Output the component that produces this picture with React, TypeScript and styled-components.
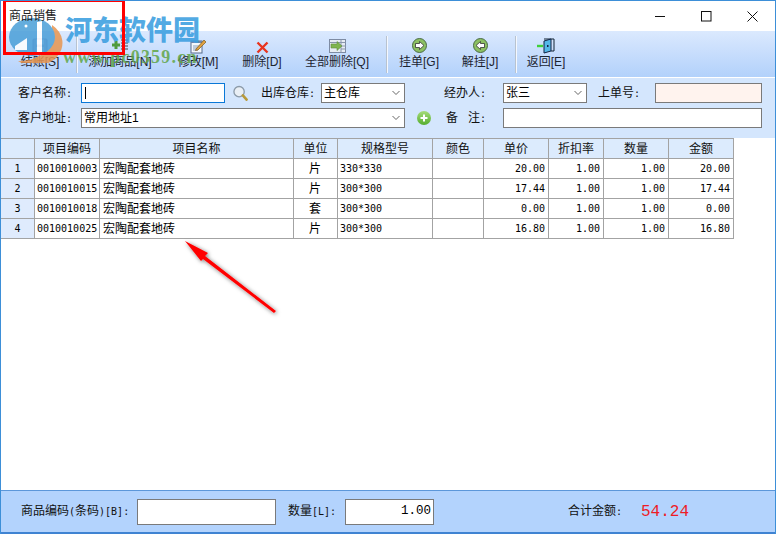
import React from "react";
import styled, { createGlobalStyle } from "styled-components";

const Global = createGlobalStyle`
  html, body { margin: 0; padding: 0; background: #fff; }
  * { box-sizing: border-box; }
`;
const CJK = `"Liberation Sans", "Noto Sans CJK SC", sans-serif`;
const MONO = `"DejaVu Sans Mono", "Noto Sans CJK SC", monospace`;
const SLAB = `"Liberation Mono", monospace`;

const Win = styled.div`
  position: relative; width: 776px; height: 534px; overflow: hidden;
  display: flex; flex-direction: column; background: #fff;
  border: 1px solid #3d8fd8; border-bottom: 0;
  font: 12px/14px ${CJK}; color: #000;
`;
const TitleBar = styled.div`
  height: 30px; flex: none; display: flex; align-items: center; padding: 0 0 0 8px; background: #fff; color: #222;
`;
const Title = styled.div`flex: 1; margin-top: -1px; position: relative; z-index: 2;`;
const WinBtn = styled.div<{ $w: number }>`
  width: ${(p) => p.$w}px; height: 30px; display: flex; align-items: center; justify-content: center;
`;
const Toolbar = styled.div`
  height: 46px; flex: none; display: flex; padding-left: 3px;
  background: linear-gradient(#dbe9fe, #b2d1fb); color: #1c2430;
`;
const ToolBtn = styled.div<{ $w: number }>`
  width: ${(p) => p.$w}px; display: flex; flex-direction: column; align-items: center; padding-top: 7px;
`;
const IconSlot = styled.div`height: 17px; display: flex; align-items: flex-start; justify-content: center;`;
const ToolLabel = styled.div`line-height: 15px; white-space: nowrap;`;
const Sep = styled.div<{ $ml: number }>`
  width: 2px; height: 37px; margin: 5px 0 0 ${(p) => p.$ml}px;
  background: linear-gradient(90deg, #b9c3cf 50%, #f4f8ff 50%);
`;
const FormPanel = styled.div`
  height: 60px; flex: none; margin-top: 1px; padding-top: 5px; background: #d4e6fd;
  display: flex; flex-direction: column; gap: 5px;
`;
const FormRow = styled.div`display: flex; height: 20px; align-items: center;`;
const FieldLabel = styled.div<{ $w: number; $mr: number }>`
  width: ${(p) => p.$w}px; margin-right: ${(p) => p.$mr}px; text-align: right; white-space: nowrap; color: #111;
`;
const Half = styled.span`font: 10px/14px ${MONO};`;
const Input = styled.div<{ $w: number; $bg?: string; $focus?: boolean }>`
  position: relative; width: ${(p) => p.$w}px; height: 20px; background: ${(p) => p.$bg || "#fff"};
  border: 1px solid ${(p) => (p.$focus ? "#0a78d7" : "#7a7a7a")};
  padding: 2px 0 0 2px; display: flex; justify-content: space-between;
`;
const Caret = styled.div`width: 1px; height: 12px; background: #000; margin: 1px 0 0 1px;`;
const ChevronWrap = styled.div`width: 12px; height: 12px; padding-top: 4px; flex: none; svg { display: block; }`;
const Slot = styled.div<{ $ml: number; $w: number }>`
  margin-left: ${(p) => p.$ml}px; width: ${(p) => p.$w}px; flex: none; display: flex; align-items: center;
`;
const Grid = styled.table`
  border-collapse: separate; border-spacing: 0; table-layout: fixed; width: 733px; flex: none;
`;
const Th = styled.th<{ $w: number }>`
  width: ${(p) => p.$w}px; height: 21px; padding: 0; font-weight: 400; background: #dcebfd; text-align: center;
  border-top: 1px solid #a3a3a3; border-right: 1px solid #a3a3a3; border-bottom: 1px solid #a3a3a3; color: #111;
`;
const RowHead = styled.td`
  height: 20px; padding: 0; text-align: center; background: #dfebfd; font: 10px/14px ${MONO};
  border-right: 1px solid #a3a3a3; border-bottom: 1px solid #a3a3a3;
`;
const Td = styled.td<{ $align?: string; $mono?: boolean; $pl?: number }>`
  height: 20px; padding: 0 3px 0 ${(p) => p.$pl ?? 2}px; text-align: ${(p) => p.$align || "left"}; white-space: nowrap; overflow: hidden;
  border-right: 1px solid #a3a3a3; border-bottom: 1px solid #a3a3a3; background: #fff;
  ${(p) => (p.$mono ? `font: 10px/14px ${MONO};` : "")}
`;
const Body = styled.div`flex: 1; background: #fff;`;
const Footer = styled.div`
  height: 44px; flex: none; background: #b3d3fd; border-top: 1px solid #5c97da; border-bottom: 2px solid #3f83d2;
  display: flex; align-items: center;
`;
const FootLabel = styled.div<{ $ml: number; $w: number }>`
  margin-left: ${(p) => p.$ml}px; width: ${(p) => p.$w}px; white-space: nowrap; color: #111;
`;
const FootInput = styled.div<{ $w: number }>`
  width: ${(p) => p.$w}px; height: 26px; background: #fff; border: 1px solid #7a7a7a; text-align: right;
  padding-right: 2px; font: 12.5px/22px ${SLAB};
`;
const Total = styled.div`
  margin-left: 19px; color: #ee1c25; font: 16px/18px ${SLAB};
`;
const Stamp = styled.div`
  position: absolute; left: 2px; top: -2px; width: 122px; height: 56px; border: 3.5px solid #f00; pointer-events: none;
`;
const WaterLogo = styled.svg`position: absolute; left: 5px; top: 16px; opacity: 0.85;`;
const WaterCn = styled.div`
  position: absolute; left: 64px; top: 11px; white-space: nowrap; font: 900 27px/34px "Noto Sans CJK SC", sans-serif;
  color: rgba(58, 158, 224, 0.88);
`;
const WaterEn = styled.div`
  position: absolute; left: 62px; top: 46px; white-space: nowrap; font: bold 18px/20px "Liberation Serif", serif;
  color: rgba(96, 165, 70, 0.85); letter-spacing: 1.2px;
`;
const Arrow = styled.svg`position: absolute; left: 170px; top: 225px; overflow: visible;`;

const Chevron = () => (
  <svg width="8" height="6" viewBox="0 0 8 6"><path d="M0.5 1 L4 4.5 L7.5 1" fill="none" stroke="#666" strokeWidth="1" /></svg>
);
const Disk = () => (
  <svg width="16" height="15" viewBox="0 0 16 15"><rect x="1" y="1" width="14" height="13" rx="1" fill="#a9a9cf" stroke="#8585b5" /><rect x="4" y="1.5" width="8" height="5" fill="#eef" /><rect x="4" y="9" width="8" height="5" fill="#dfe2ef" /></svg>
);
const AddList = () => (
  <svg width="18" height="15" viewBox="0 0 18 15"><path d="M10 2h7M10 5h7M10 8h7M10 11h7" stroke="#444" strokeWidth="1" /><path d="M5 3v8M1 7h8" stroke="#4f9a3c" strokeWidth="3" /></svg>
);
const Edit = () => (
  <svg width="17" height="16" viewBox="0 0 17 16"><rect x="1" y="3" width="11" height="12" fill="#f4f7fc" stroke="#566b8c" /><rect x="1" y="3" width="11" height="2" fill="#6d86ad" /><path d="M3 8h7M3 10h6M3 12h5" stroke="#8da0bb" /><path d="M6 11 L14 2 L16 4 L8 12 L5.5 12.5Z" fill="#e0a040" stroke="#7a5a20" strokeWidth=".7" /></svg>
);
const Del = () => (
  <svg width="13" height="13" viewBox="0 0 13 13" style={{ marginTop: 3 }}><path d="M1.5 1.5 L11.5 11.5 M11.5 1.5 L1.5 11.5" stroke="#e8341f" strokeWidth="2.4" /></svg>
);
const DelAll = () => (
  <svg width="17" height="15" viewBox="0 0 17 15"><rect x=".5" y="1.5" width="16" height="13" fill="#e7ecf4" stroke="#7d8ba3" /><path d="M.5 4.5h16M12 1.5v13M12 8h5M12 11h5" stroke="#8a97ac" /><path d="M2 6h6V3.5L13 8l-5 4.5V10H2Z" fill="#7fb54e" stroke="#5f8c3a" strokeWidth=".6" /></svg>
);
const Hang = ({ left }: { left?: boolean }) => (
  <svg width="15" height="15" viewBox="0 0 15 15">
    <circle cx="7.5" cy="7.5" r="7" fill="#8cc063" stroke="#4b6b46" />
    <path d={left ? "M3 7.5 L7.5 3.5 V5.5 H11.5 V9.5 H7.5 V11.5Z" : "M12 7.5 L7.5 3.5 V5.5 H3.5 V9.5 H7.5 V11.5Z"} fill="#fff" stroke="#333" strokeWidth=".8" />
  </svg>
);
const Door = () => (
  <svg width="19" height="16" viewBox="0 0 19 16"><path d="M7 1 H17 V13 H14" fill="none" stroke="#123" strokeWidth="1" /><path d="M7 3 L14 1 V13 L7 15Z" fill="#55b8e8" stroke="#124" strokeWidth="1" /><path d="M0 8h6" stroke="#3fd13a" strokeWidth="2.4" /><rect x="10" y="7" width="1.5" height="2" fill="#124" /></svg>
);
const Search = () => (
  <svg width="16" height="17" viewBox="0 0 16 17"><circle cx="6.5" cy="6.5" r="5.5" fill="#e9eff5" stroke="#8b9aa8" strokeWidth="1.4" /><path d="M10.5 10.5 L14.5 15" stroke="#b89a3a" strokeWidth="2.8" strokeLinecap="round" /></svg>
);
const PlusCircle = () => (
  <svg width="14" height="14" viewBox="0 0 14 14"><defs><linearGradient id="pg" x1="0" y1="0" x2="0" y2="1"><stop offset="0" stopColor="#a6dc7a" /><stop offset="1" stopColor="#55ad2e" /></linearGradient></defs><circle cx="7" cy="7" r="7" fill="url(#pg)" /><path d="M7 3.5v7M3.5 7h7" stroke="#fff" strokeWidth="2" /></svg>
);

const tools: { w: number; label: string; key: string; icon: React.ReactNode; sepBefore?: number }[] = [
  { w: 72, label: "结账", key: "[S]", icon: <Disk /> },
  { w: 84, label: "添加商品", key: "[N]", icon: <AddList />, sepBefore: 0 },
  { w: 72, label: "修改", key: "[M]", icon: <Edit /> },
  { w: 56, label: "删除", key: "[D]", icon: <Del /> },
  { w: 94, label: "全部删除", key: "[Q]", icon: <DelAll /> },
  { w: 62, label: "挂单", key: "[G]", icon: <Hang />, sepBefore: 2 },
  { w: 60, label: "解挂", key: "[J]", icon: <Hang left /> },
  { w: 58, label: "返回", key: "[E]", icon: <Door />, sepBefore: 5 },
];
const cols: [string, number][] = [
  ["", 34], ["项目编码", 65], ["项目名称", 194], ["单位", 44], ["规格型号", 95],
  ["颜色", 51], ["单价", 65], ["折扣率", 55], ["数量", 65], ["金额", 65],
];
const rows = [
  ["0010010003", "片", "330*330", "20.00", "20.00"],
  ["0010010015", "片", "300*300", "17.44", "17.44"],
  ["0010010018", "套", "300*300", "0.00", "0.00"],
  ["0010010025", "片", "300*300", "16.80", "16.80"],
];

export default function App() {
  return (
    <Win>
      <Global />
      <TitleBar>
        <Title>商品销售</Title>
        <WinBtn $w={46}><svg width="11" height="11"><path d="M0 5.5h10" stroke="#111" /></svg></WinBtn>
        <WinBtn $w={46}><svg width="11" height="11"><rect x=".5" y=".5" width="9.5" height="9.5" fill="none" stroke="#111" /></svg></WinBtn>
        <WinBtn $w={46}><svg width="11" height="11"><path d="M.5.5l10 10M10.5.5l-10 10" stroke="#111" /></svg></WinBtn>
      </TitleBar>
      <Toolbar>
        {tools.map((t) => (
          <React.Fragment key={t.key}>
            {t.sepBefore !== undefined && <Sep $ml={t.sepBefore} />}
            <ToolBtn $w={t.w}>
              <IconSlot>{t.icon}</IconSlot>
              <ToolLabel>{t.label}{t.key}</ToolLabel>
            </ToolBtn>
          </React.Fragment>
        ))}
      </Toolbar>
      <FormPanel>
        <FormRow>
          <FieldLabel $w={71} $mr={9}>客户名称<Half>:</Half></FieldLabel>
          <Input $w={144} $focus><Caret /></Input>
          <Slot $ml={8} $w={15}><Search /></Slot>
          <FieldLabel $w={67} $mr={6}>出库仓库<Half>:</Half></FieldLabel>
          <Input $w={84}>主仓库<ChevronWrap><Chevron /></ChevronWrap></Input>
          <FieldLabel $w={81} $mr={17}>经办人<Half>:</Half></FieldLabel>
          <Input $w={84}>张三<ChevronWrap><Chevron /></ChevronWrap></Input>
          <FieldLabel $w={53} $mr={15}>上单号<Half>:</Half></FieldLabel>
          <Input $w={107} $bg="#fff3ee" />
        </FormRow>
        <FormRow>
          <FieldLabel $w={71} $mr={9}>客户地址<Half>:</Half></FieldLabel>
          <Input $w={324}>常用地址1<ChevronWrap><Chevron /></ChevronWrap></Input>
          <Slot $ml={12} $w={14}><PlusCircle /></Slot>
          <FieldLabel $w={55} $mr={17}>备&nbsp;&nbsp;&nbsp;注<Half>:</Half></FieldLabel>
          <Input $w={259} />
        </FormRow>
      </FormPanel>
      <Grid>
        <thead>
          <tr>{cols.map(([h, w]) => <Th key={w + h} $w={w}>{h}</Th>)}</tr>
        </thead>
        <tbody>
          {rows.map((r, i) => (
            <tr key={r[0]}>
              <RowHead>{i + 1}</RowHead>
              <Td $mono>{r[0]}</Td>
              <Td $pl={3}>宏陶配套地砖</Td>
              <Td $align="center">{r[1]}</Td>
              <Td $mono>{r[2]}</Td>
              <Td />
              <Td $mono $align="right">{r[3]}</Td>
              <Td $mono $align="right">1.00</Td>
              <Td $mono $align="right">1.00</Td>
              <Td $mono $align="right">{r[4]}</Td>
            </tr>
          ))}
        </tbody>
      </Grid>
      <Body />
      <Footer>
        <FootLabel $ml={20} $w={116}>商品编码<Half>(</Half>条码<Half>)[B]:</Half></FootLabel>
        <FootInput $w={139} />
        <FootLabel $ml={12} $w={57}>数量<Half>[L]:</Half></FootLabel>
        <FootInput $w={89}>1.00</FootInput>
        <FootLabel $ml={134} $w={54}>合计金额<Half>:</Half></FootLabel>
        <Total>54.24</Total>
      </Footer>
      <WaterLogo width="58" height="46" viewBox="0 0 58 46">
        <path d="M46 8 A24 20 0 0 1 12 44 A34 24 0 0 0 46 24 Z" fill="#e8954f" />
        <ellipse cx="26" cy="20" rx="23" ry="19" fill="#4a9fd8" />
        <path d="M9 29 L21 21 L21 33 L9 33Z" fill="#fff" />
        <path d="M31 5 L36 4 L36 37 L31 38Z" fill="#fff" />
        <circle cx="20" cy="9" r="1.5" fill="#fff" />
      </WaterLogo>
      <WaterCn>河东软件园</WaterCn>
      <WaterEn>www.pc0359.cn</WaterEn>
      <Stamp />
      <Arrow width="120" height="100" viewBox="0 0 120 100">
        <defs>
          <filter id="sh" x="-20%" y="-20%" width="150%" height="150%">
            <feDropShadow dx="1" dy="1" stdDeviation="2" floodColor="#000" floodOpacity="0.55" />
          </filter>
        </defs>
        <g filter="url(#sh)" fill="#f00">
          <path d="M14 15 L37 27 L34 30 L105 85 L103 87 L32 33 L30 35 Z" />
        </g>
      </Arrow>
    </Win>
  );
}
